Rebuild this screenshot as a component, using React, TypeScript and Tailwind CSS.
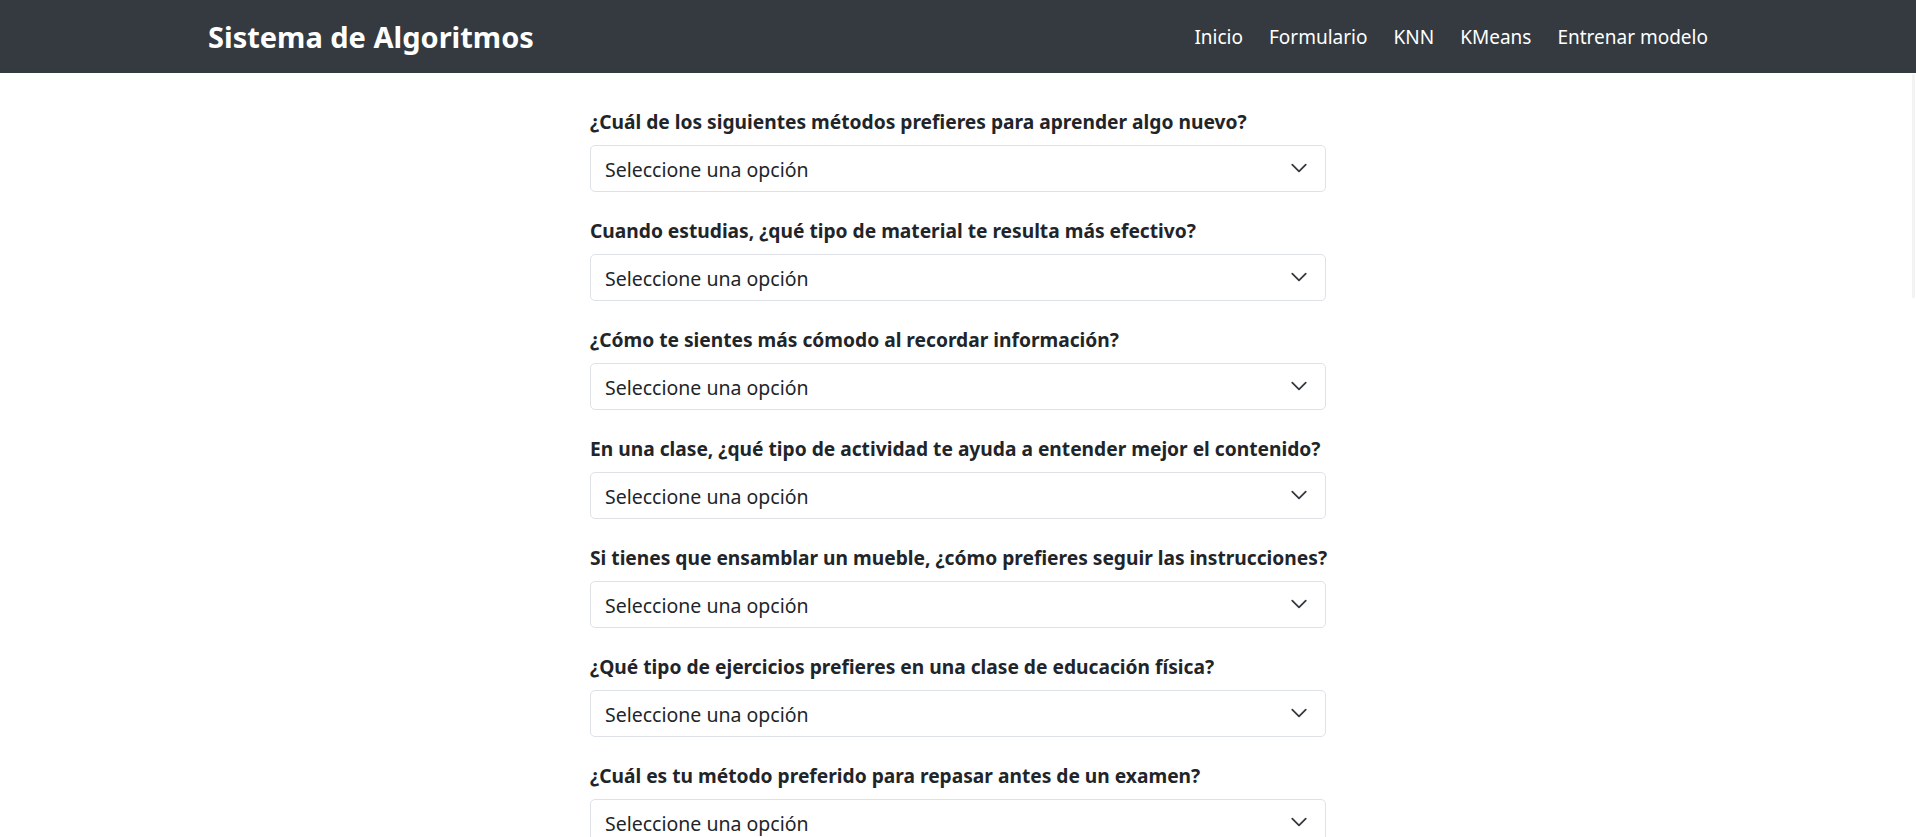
import { useState } from 'react'

const preguntas = [
  '¿Cuál de los siguientes métodos prefieres para aprender algo nuevo?',
  'Cuando estudias, ¿qué tipo de material te resulta más efectivo?',
  '¿Cómo te sientes más cómodo al recordar información?',
  'En una clase, ¿qué tipo de actividad te ayuda a entender mejor el contenido?',
  'Si tienes que ensamblar un mueble, ¿cómo prefieres seguir las instrucciones?',
  '¿Qué tipo de ejercicios prefieres en una clase de educación física?',
  '¿Cuál es tu método preferido para repasar antes de un examen?',
  '¿Cómo prefieres recibir instrucciones para una tarea nueva?',
]

const opciones = ['Visual', 'Auditivo', 'Kinestésico']

const links = ['Inicio', 'Formulario', 'KNN', 'KMeans', 'Entrenar modelo']

function Pregunta({ texto, id }: { texto: string; id: number }) {
  const [valor, setValor] = useState('')

  return (
    <div className="mb-[24px]">
      <label
        htmlFor={`p${id}`}
        className="mb-[9px] block whitespace-nowrap pt-[1px] text-[19.2px] font-bold leading-[28px] text-[#212529]"
      >
        {texto}
      </label>
      <div className="relative">
        <select
          id={`p${id}`}
          value={valor}
          onChange={(e) => setValor(e.target.value)}
          className="block h-[47px] w-full appearance-none rounded-[5px] border border-[#dee2e6] bg-white pl-[14px] pr-[48px] pt-[2px] text-[19.5px] text-[#212529] outline-none"
        >
          <option value="">Seleccione una opción</option>
          {opciones.map((o) => (
            <option key={o} value={o}>
              {o}
            </option>
          ))}
        </select>
        <svg
          className="pointer-events-none absolute right-[18px] top-[14px]"
          width="18"
          height="18"
          viewBox="0 0 16 16"
          fill="none"
        >
          <path d="m2 5 6 6 6-6" stroke="#343a40" strokeWidth="1.6" strokeLinecap="round" strokeLinejoin="round" />
        </svg>
      </div>
    </div>
  )
}

export default function App() {
  return (
    <div className="relative h-screen overflow-hidden bg-white font-['Noto_Sans',sans-serif]">
      <nav className="bg-[#343a40]">
        <div className="mx-auto flex h-[73px] max-w-[1500px] items-center justify-between">
          <a href="#" className="text-[29px] font-bold text-white">
            Sistema de Algoritmos
          </a>
          <ul className="flex items-center gap-[26px] pt-[1px]">
            {links.map((l) => (
              <li key={l}>
                <a href="#" className="text-[19px] text-white">
                  {l}
                </a>
              </li>
            ))}
          </ul>
        </div>
      </nav>

      <form className="mx-auto w-[736px] pt-[34px]">
        {preguntas.map((p, i) => (
          <Pregunta key={i} id={i} texto={p} />
        ))}
      </form>

      <div className="absolute right-[1px] top-[74px] h-[224px] w-[3px] bg-[#f3f3f3]"></div>
    </div>
  )
}
